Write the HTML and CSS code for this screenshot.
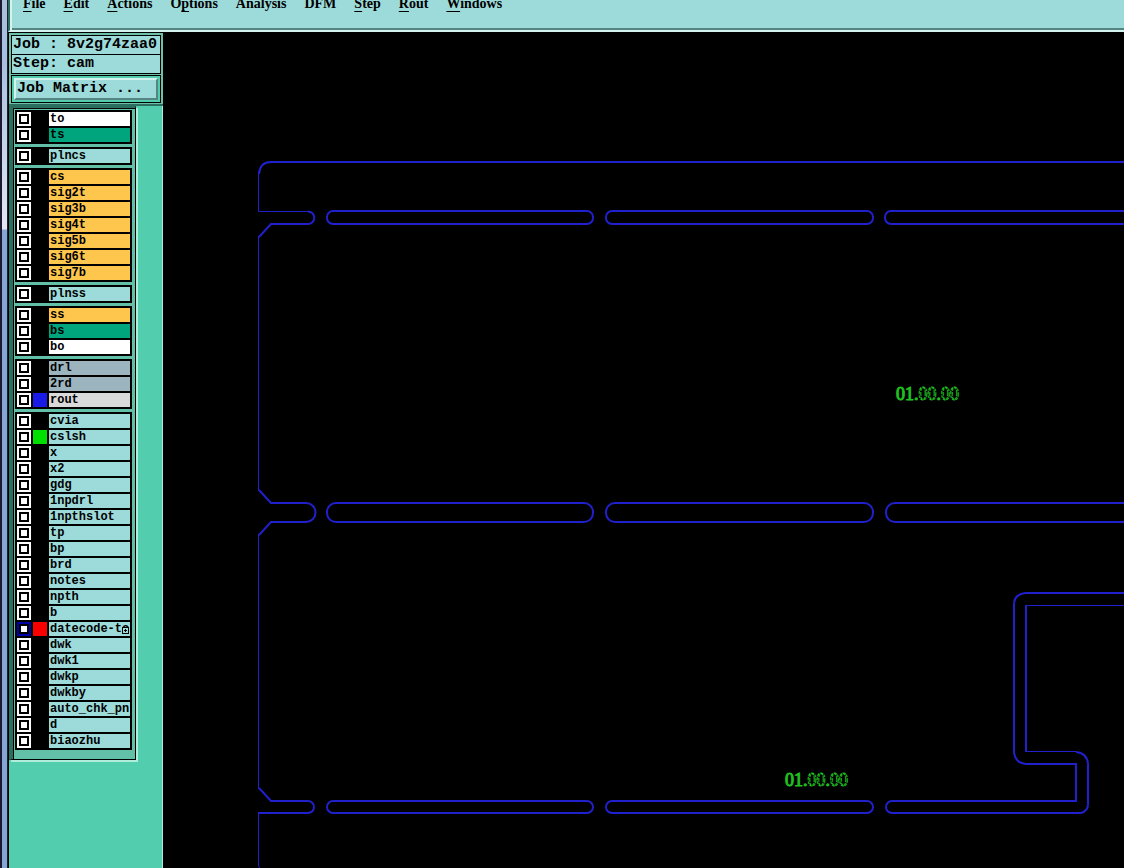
FILE: index.html
```
<!DOCTYPE html>
<html lang="en">
<head>
    <meta charset="UTF-8">
    <meta name="viewport" content="width=device-width, initial-scale=1.0">
    <title>Graphic Editor - 8v2g74zaa0</title>
    <link rel="stylesheet" href="styles.css">
</head>
<body>
    <div class="frame"></div>
    <div class="window">
        <nav class="menubar">
            <a href="#"><u>F</u>ile</a>
            <a href="#"><u>E</u>dit</a>
            <a href="#"><u>A</u>ctions</a>
            <a href="#">O<u>p</u>tions</a>
            <a href="#">Analysis</a>
            <a href="#">DFM</a>
            <a href="#"><u>S</u>tep</a>
            <a href="#"><u>R</u>out</a>
            <a href="#"><u>W</u>indows</a>
        </nav>
        <div class="main">
            <aside class="sidebar">
                <div class="job">
                    <div class="info">
                        <div>Job : 8v2g74zaa0</div>
                        <div>Step: cam</div>
                    </div>
                    <div class="matrix"><button type="button">Job Matrix ...</button></div>
                </div>
                <div class="well">
                    <div class="layers" id="layers"></div>
                </div>
            </aside>
            <main class="canvas">
                <svg width="100%" height="100%">
                    <g class="rout" transform="translate(-163 -32)">
                        <!-- board outline -->
                        <path d="M1200 162H271Q260 162 259 174M308 211.500A6 6 0 0 1 308 224H271L259 237M259 490L271 503H306A9 9 0 0 1 306 522H271L259 535M259 788L271 801H308A6 6 0 0 1 308 813H258"/>
                        <path class="thin" d="M258.500 172V211.500H308M258.500 236V491M258.500 534V789M258.500 813V866L261 870"/>
                        <!-- slots between boards -->
                        <rect x="327" y="211" width="266" height="13" rx="6"/>
                        <rect x="606" y="211" width="267" height="13" rx="6"/>
                        <rect x="885" y="211" width="400" height="13" rx="6"/>
                        <rect x="327" y="503" width="266" height="19" rx="9"/>
                        <rect x="606" y="503" width="267" height="19" rx="9"/>
                        <rect x="886" y="503" width="400" height="19" rx="9"/>
                        <rect x="327" y="801" width="266" height="12" rx="6"/>
                        <rect x="606" y="801" width="267" height="12" rx="6"/>
                        <!-- stepped cutout -->
                        <path d="M1200 593H1026Q1014 594 1014 605V752Q1015 763 1026 764H1076V801H892A6 6 0 0 0 892 813H1081Q1088 811 1088 804V764Q1087 753 1076 752M1026 752V605"/>
                        <path class="thin" d="M1076 751.500H1026M1026 605.500H1200"/>
                    </g>
                    <g class="datecode" transform="translate(-163 -32)">
                        <text x="896" y="400">01.<tspan class="dashed">00</tspan>.<tspan class="dashed">00</tspan></text>
                        <text x="785" y="786">01.<tspan class="dashed">00</tspan>.<tspan class="dashed">00</tspan></text>
                    </g>
                </svg>
            </main>
        </div>
    </div>

    <script>
    // each group: [layer name, background class, swatch class]
    const groups = [
        [['to', 'white'], ['ts', 'green']],
        [['plncs']],
        [['cs', 'gold'], ['sig2t', 'gold'], ['sig3b', 'gold'], ['sig4t', 'gold'], ['sig5b', 'gold'], ['sig6t', 'gold'], ['sig7b', 'gold']],
        [['plnss']],
        [['ss', 'gold'], ['bs', 'green'], ['bo', 'white']],
        [['drl', 'gray'], ['2rd', 'gray'], ['rout', 'silver', 'on-blue']],
        [['cvia'], ['cslsh', '', 'on-green'], ['x'], ['x2'], ['gdg'], ['1npdrl'], ['1npthslot'], ['tp'], ['bp'], ['brd'],
         ['notes'], ['npth'], ['b'], ['datecode-to', 'work', 'on-red'], ['dwk'], ['dwk1'], ['dwkp'], ['dwkby'],
         ['auto_chk_pnl'], ['d'], ['biaozhu']]
    ];

    document.getElementById('layers').innerHTML = groups.map(rows =>
        '<div class="group">' + rows.map(([name, kind = '', swatch = '']) =>
            `<label class="layer ${kind}"><input type="checkbox"><span class="swatch ${swatch}"></span><span class="name">${name}</span></label>`
        ).join('') + '</div>'
    ).join('');
    </script>
</body>
</html>
```

FILE: styles.css
```
* {
    box-sizing: border-box;
}
body {
    margin: 0;
    display: flex;
    height: 100vh;
    overflow: hidden;
    background: #000;
    color: #000;
}
.frame {
    width: 8px;
    flex: none;
    border-left: 2px solid #1c1a30;
    border-right: 1px solid #16222e;
    background: linear-gradient(#a9bfe0, #a9bfe0 60px, #e4e6f2 229px, #86a5d6 230px, #86a5d6);
}
.window {
    flex: 1;
    min-width: 0;
    display: flex;
    flex-direction: column;
}
.menubar {
    height: 32px;
    flex: none;
    display: flex;
    gap: 18px;
    padding-left: 13px;
    overflow: hidden;
    background: #9cdbda;
    border-left: 2px solid #2f6a5f;
    border-bottom: 2px solid #d4f2ee;
    box-shadow: inset 2px 0 #d4f2ee, inset 0 -2px #568480;
}
.menubar a {
    margin-top: -5px;
    font: bold 14px/18px "Liberation Serif", serif;
    color: #000;
    text-decoration: none;
}
.menubar u {
    text-underline-offset: 3px;
    text-decoration-thickness: 1px;
}
.main {
    flex: 1;
    min-height: 0;
    display: flex;
}
.sidebar {
    width: 155px;
    flex: none;
    display: flex;
    flex-direction: column;
    background: #52ceaf;
    border-left: 1px solid #000;
}
.job {
    padding: 2px 2px 1px;
    border-top: 1px solid #000;
    border-bottom: 2px solid #2a6f60;
    background: #6cbfa9;
    font: bold 15px/18px "Liberation Mono", monospace;
}
.info {
    border: 1px solid #000;
    background: #9cdbda;
    white-space: nowrap;
}
.info div {
    padding-left: 1px;
}
.info div + div {
    border-top: 1px solid #000;
}
.matrix {
    margin-top: 1px;
    padding: 2px;
    border: 1px solid #000;
    background: #52ceaf;
}
.matrix button {
    display: block;
    width: 100%;
    height: 22px;
    padding: 0 1px;
    border: 2px solid;
    border-color: #d4f2ee #568480 #568480 #d4f2ee;
    background: #9cdbda;
    font: inherit;
    color: #000;
    text-align: left;
}
.well {
    flex: 1;
    display: flex;
    align-items: flex-start;
    border-right: 1px solid #b0ecda;
    background: #52ceaf;
}
.layers {
    width: 127px;
    padding: 2px 3px 9px 2px;
    border: 1px solid #000;
    border-left: 4px solid #2a6f60;
    border-top: 2px solid #2a6f60;
    box-shadow: inset 1px 1px #000, 2px 2px #b0ecda;
    background: #62c0a8;
}
.group {
    padding: 1px 0;
    background: #000;
}
.group + .group {
    margin-top: 3px;
}
.layer {
    display: flex;
    gap: 2px;
    padding: 1px 2px;
}
.layer input {
    appearance: none;
    width: 14px;
    height: 14px;
    flex: none;
    margin: 0;
    border: 2px solid #fff;
    background: #fff;
    box-shadow: inset 0 0 0 2px #000;
}
.swatch {
    width: 14px;
    flex: none;
}
.name {
    flex: 1;
    min-width: 0;
    height: 14px;
    padding-left: 1px;
    overflow: hidden;
    white-space: nowrap;
    background: #9cdbda;
    font: bold 12px/14px "Liberation Mono", monospace;
}
.white .name { background: #fff; }
.green .name { background: #00a57d; }
.gold .name { background: #ffc64d; }
.gray .name { background: #9cb4be; }
.silver .name { background: #dadada; }
.on-blue { background: #1a1ae6; }
.on-green { background: #00e000; }
.on-red { background: #f80000; }
.work input {
    border-color: #0000a8;
}
.work .name {
    position: relative;
}
/* small grid mark over the end of the work layer's name */
.work .name::after {
    content: "";
    position: absolute;
    right: 1px;
    top: 5px;
    width: 5px;
    height: 5px;
    border: 1px solid #000;
    background: linear-gradient(#000, #000) center / 1px 3px no-repeat, linear-gradient(#000, #000) center / 3px 1px no-repeat, #9cdbda;
}
.canvas {
    flex: 1;
    min-width: 0;
    background: #000;
}
.canvas svg {
    display: block;
}
.rout {
    fill: none;
    stroke: #2020cc;
    stroke-width: 2;
}
.rout .thin {
    stroke-width: 1;
}
.datecode {
    fill: #20c020;
    stroke: #20c020;
    stroke-width: 1;
    font: 18px "Liberation Serif", serif;
}
.dashed {
    fill: none;
    stroke-dasharray: 3 1;
}
```
